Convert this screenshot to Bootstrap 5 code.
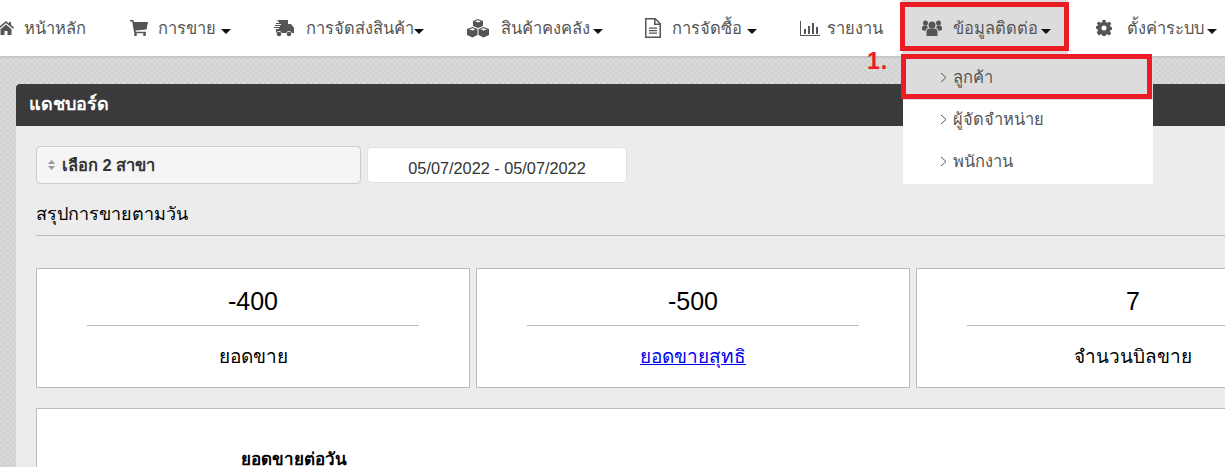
<!DOCTYPE html>
<html lang="th">
<head>
  <meta charset="UTF-8">
  <meta name="viewport" content="width=device-width, initial-scale=1">
  <title>แดชบอร์ด</title>
  <link href="https://cdn.jsdelivr.net/npm/bootstrap@5.3.3/dist/css/bootstrap.min.css" rel="stylesheet">
  <style>
    html, body { height: 467px; overflow: hidden; }
    body { width: 1225px; font-family: "Liberation Sans", "Noto Sans", sans-serif; color: #000; position: relative;
      background: repeating-conic-gradient(#d1d1d1 0 25%, #dadada 0 50%) 0 0 / 6px 6px; }
    .top-nav { height: 58px; background: #fff; border-bottom: 2px solid #c8c8c8; flex-wrap: nowrap; width: 1225px; }
    .top-nav .nav-link { height: 54px; padding: 2px 0 0 20px; color: #555; font-size: 16.5px; display: flex; align-items: center; white-space: nowrap; }
    .top-nav .nav-item:nth-child(1) { width: 110px; }
    .top-nav .nav-item:nth-child(1) .nav-link { padding-left: 0; margin-left: -2px; }
    .top-nav .nav-item:nth-child(2) { width: 145px; }
    .top-nav .nav-item:nth-child(3) { width: 192px; }
    .top-nav .nav-item:nth-child(4) { width: 178px; }
    .top-nav .nav-item:nth-child(5) { width: 155px; }
    .top-nav .nav-item:nth-child(6) { width: 122px; }
    .top-nav .nav-item:nth-child(7) { width: 166px; }
    .top-nav .nav-item:nth-child(8) .nav-link { padding-left: 28px; }
    .top-nav .nav-link.is-open { background: #dcdcdc; }
    .nav-ico { fill: #555; margin-right: 10px; flex: none; }
    .nav-caret { width: 0; height: 0; border-left: 5px solid transparent; border-right: 5px solid transparent; border-top: 5px solid #111; margin-left: 3px; margin-top: 6px; }
    .nav-caret.caret-far { margin-left: 5px; }
    .nav-caret.caret-tight { margin-left: 0; }
    .sub-menu { display: block; top: 58px; left: 903px; width: 250px; padding: 0; margin: 0; border: 0; border-radius: 0; z-index: 5; }
    .sub-menu .dropdown-item { height: 42px; padding: 0 0 3px 37px; display: flex; align-items: center; color: #555; font-size: 16.5px; }
    .sub-menu .dropdown-item.is-open { background: #dcdcdc; }
    .sub-menu svg { margin-right: 6px; }
    .red-frame { position: absolute; border: 5px solid #ed1c24; z-index: 6; pointer-events: none; }
    .frame-nav { left: 900px; top: 2px; width: 169px; height: 49px; }
    .frame-item { left: 901px; top: 54px; width: 251px; height: 45px; }
    .step-no { position: absolute; left: 867px; top: 44px; color: #ed1c24; font-weight: 700; font-size: 23px; letter-spacing: 1px; z-index: 6; }
    .dash-panel { margin: 26px 0 0 16px; width: 1400px; height: 400px; background: #ececec; }
    .dash-head { height: 42px; background: #3a3a3a; color: #fff; font-weight: 700; font-size: 18px; padding: 0 13px 2px; border-radius: 4px 4px 0 0; display: flex; align-items: center; }
    .dash-body { padding: 20px 20px 0; }
    .branch-pick { width: 325px; height: 38px; background: #f5f5f5; border: 1px solid #ccc; border-radius: 4px; font-size: 16.5px; font-weight: 700; color: #333; padding: 0 11px; }
    .sort-arrows { width: 7px; margin-right: 7px; }
    .date-pick { width: 260px; height: 36px; margin: 1px 0 0 6px; background: #fff; border: 1px solid #e2e2e2; border-radius: 4px; font-size: 16.3px; color: #333; text-align: center; padding-top: 9px; line-height: 22px; }
    .sum-title { font-size: 18px; height: 35px; margin-top: 17px; line-height: 27px; border-bottom: 1px solid #bbb; }
    .stat-row { gap: 6px; margin-top: 32px; }
    .stat-box { width: 434px; height: 120px; background: #fff; border: 1px solid #bbb; text-align: center; padding-top: 14px; }
    .stat-num { font-size: 25px; line-height: 36px; }
    .stat-line { width: 332px; margin: 6px auto 0; border-top: 1px solid #bbb; }
    .stat-label { font-size: 19px; margin-top: 17px; line-height: 27px; }
    .stat-label a { color: #00e; }
    .chart-box { width: 1400px; height: 100px; background: #fff; border: 1px solid #bbb; margin-top: 20px; padding: 38px 0 0 204px; font-weight: 700; font-size: 17px; }
  </style>
</head>
<body>
  <ul class="nav top-nav">
    <li class="nav-item"><a class="nav-link" href="#">
      <svg class="nav-ico" width="16" height="14" viewBox="0 0 16 14"><path d="M8 0 0 6.600l1 1.200L8 2l7 5.800 1-1.200-3-2.500V1h-2v1.500zM2.500 8.200V14h4v-4h3v4h4V8.200L8 3.600z"/></svg>หน้าหลัก</a></li>
    <li class="nav-item"><a class="nav-link" href="#">
      <svg class="nav-ico" width="18" height="16" viewBox="0 0 18 16"><path d="M0 0h3.400l.5 2H18l-1.500 7.400-11 1 .3 1.400H16v1.400H4.200L2.200 1.400H0z"/><circle cx="5.500" cy="14.500" r="1.500"/><circle cx="14.500" cy="14.500" r="1.500"/></svg>การขาย<span class="nav-caret caret-far"></span></a></li>
    <li class="nav-item"><a class="nav-link" href="#">
      <svg class="nav-ico" style="margin-left:-2px;margin-right:12px" width="21" height="17" viewBox="0 0 21 17"><path d="M5 0h10v4h3l3 4v5h-2.200a3 3 0 0 0-5.600 0H8.800a3 3 0 0 0-5.600 0H3V9h3V8H1V7h6V6H2V5h6V4H3V3h3V1.500H4z"/><circle cx="6" cy="14" r="2.300"/><circle cx="16" cy="14" r="2.300"/></svg>การจัดส่งสินค้า<span class="nav-caret caret-tight"></span></a></li>
    <li class="nav-item"><a class="nav-link" href="#">
      <svg class="nav-ico" style="margin-right:12px" width="22" height="19" viewBox="0 0 22 19"><path d="M11 0l5 2v5l-5 2-5-2V2zM8 2.300l3 1.200 3-1.200-3-1.100zM5.500 8l5 2v6l-5 2.500L0 16v-6zM2 10.300l3.500 1.300 3-1.300-3-1.100zM16.500 8l5.500 2v6l-5.500 2.500-5-2.500v-6zM13.500 10.300l3 1.300 3.500-1.300-3.500-1.100z" fill-rule="evenodd"/></svg>สินค้าคงคลัง<span class="nav-caret"></span></a></li>
    <li class="nav-item"><a class="nav-link" href="#">
      <svg class="nav-ico" style="margin-right:11px" width="16" height="20" viewBox="0 0 16 20"><path d="M0 0h10.500L16 5.500V20H0zM1.500 1.500v17h13V7H9V1.500zM10.500 2v3.500H14zM4 9.500h8v1.200H4zM4 12h8v1.200H4zM4 14.500h8v1.200H4z" fill-rule="evenodd"/></svg>การจัดซื้อ<span class="nav-caret caret-far"></span></a></li>
    <li class="nav-item"><a class="nav-link" href="#">
      <svg class="nav-ico" style="margin-right:7px" width="20" height="15" viewBox="0 0 20 15"><path d="M0 0h1v14h19v1H0zM4 8h2v5H4zM8 5h2v8H8zM12 2h2v11h-2zM16 6h2v7h-2z"/></svg>รายงาน</a></li>
    <li class="nav-item"><a class="nav-link is-open" href="#">
      <svg class="nav-ico" style="margin-right:11px" width="20" height="16" viewBox="0 0 20 16"><circle cx="10" cy="5" r="3.500"/><path d="M4.500 16v-4.500C4.500 9.500 6 8.500 7.500 8.500h5c1.500 0 3 1 3 3V16z"/><circle cx="3.500" cy="3" r="2.500"/><circle cx="16.500" cy="3" r="2.500"/><path d="M0 10V8c0-1.500 1-2.500 2-2.500h3a4.500 4.500 0 0 0 1 2.500C4.500 8.500 3.500 9.500 3.500 11zM20 10V8c0-1.500-1-2.500-2-2.500h-3a4.500 4.500 0 0 1-1 2.500c1.500.5 2.500 1.500 2.500 3z"/></svg>ข้อมูลติดต่อ<span class="nav-caret"></span></a></li>
    <li class="nav-item"><a class="nav-link" href="#">
      <svg class="nav-ico" style="margin-right:15px" width="16" height="16" viewBox="0 0 16 16"><path fill-rule="evenodd" d="M6.500 0h3l.4 2.200 1.400.6 1.900-1.300 2.100 2.100L14 5.500l.6 1.400 1.400.3v2.600l-1.400.3-.6 1.400 1.300 1.900-2.100 2.100-1.900-1.300-1.400.6-.4 1.200h-3l-.4-1.200-1.400-.6-1.900 1.300L.7 12.400 2 10.500l-.6-1.400L0 8.800V6.200l1.400-.3L2 4.500.7 3.600l2.100-2.100 1.900 1.300 1.400-.6zM8 5.500a2.500 2.500 0 1 0 0 5 2.500 2.500 0 0 0 0-5z"/></svg>ตั้งค่าระบบ<span class="nav-caret"></span></a></li>
  </ul>

  <ul class="dropdown-menu sub-menu position-absolute">
    <li><a class="dropdown-item is-open" href="#"><svg width="7" height="11" viewBox="0 0 7 11"><path d="M1 1l5 4.500L1 10" fill="none" stroke="#555"/></svg>ลูกค้า</a></li>
    <li><a class="dropdown-item" href="#"><svg width="7" height="11" viewBox="0 0 7 11"><path d="M1 1l5 4.500L1 10" fill="none" stroke="#555"/></svg>ผู้จัดจำหน่าย</a></li>
    <li><a class="dropdown-item" href="#"><svg width="7" height="11" viewBox="0 0 7 11"><path d="M1 1l5 4.500L1 10" fill="none" stroke="#555"/></svg>พนักงาน</a></li>
  </ul>
  <div class="red-frame frame-nav"></div>
  <div class="red-frame frame-item"></div>
  <div class="step-no">1.</div>

  <div class="dash-panel">
    <div class="dash-head">แดชบอร์ด</div>
    <div class="dash-body">
      <div class="d-flex">
        <div class="branch-pick d-flex align-items-center">
          <svg class="sort-arrows" width="7" height="10" viewBox="0 0 7 10"><path d="M3.500 0 7 4H0zM0 6h7l-3.500 4z" fill="#999"/></svg>เลือก 2 สาขา
        </div>
        <div class="date-pick">05/07/2022 - 05/07/2022</div>
      </div>
      <div class="sum-title">สรุปการขายตามวัน</div>
      <div class="d-flex stat-row">
        <div class="stat-box">
          <div class="stat-num">-400</div>
          <div class="stat-line"></div>
          <div class="stat-label">ยอดขาย</div>
        </div>
        <div class="stat-box">
          <div class="stat-num">-500</div>
          <div class="stat-line"></div>
          <div class="stat-label"><a href="#">ยอดขายสุทธิ</a></div>
        </div>
        <div class="stat-box">
          <div class="stat-num">7</div>
          <div class="stat-line"></div>
          <div class="stat-label">จำนวนบิลขาย</div>
        </div>
      </div>
      <div class="chart-box">ยอดขายต่อวัน</div>
    </div>
  </div>
  <script src="https://cdn.jsdelivr.net/npm/bootstrap@5.3.3/dist/js/bootstrap.bundle.min.js"></script>
</body>
</html>
